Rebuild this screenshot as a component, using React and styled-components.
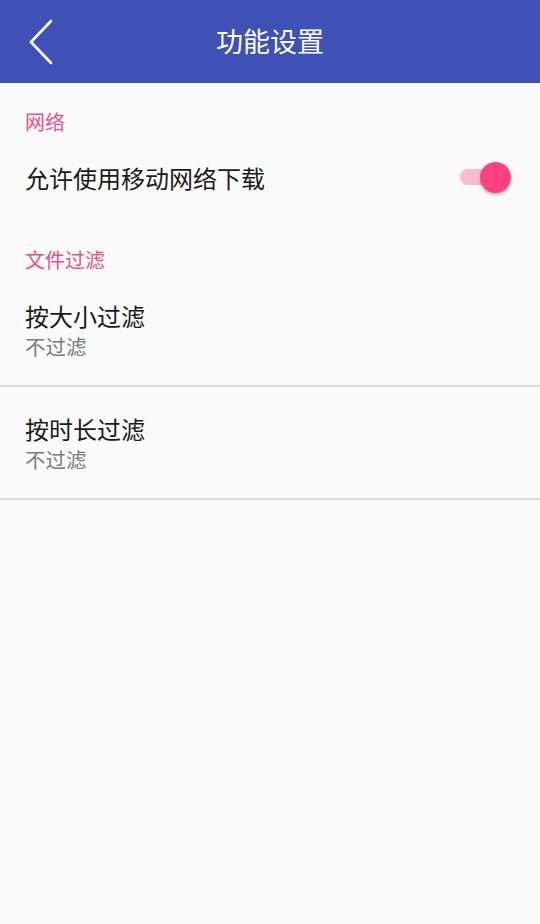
import React from "react";
import styled, { createGlobalStyle } from "styled-components";

const Global = createGlobalStyle`
  html, body { margin: 0; padding: 0; background: #fafafa; }
  body { font-family: "Noto Sans CJK SC", "Noto Sans", sans-serif; }
  #root { min-height: 924px; background: #fafafa; }
`;

const Page = styled.div`
  width: 540px;
  min-height: 924px;
  background: #fafafa;
  display: flex;
  flex-direction: column;
`;

const Toolbar = styled.header`
  height: 83px;
  background: #3f51b5;
  display: flex;
  align-items: center;
  justify-content: center;
  position: relative;
`;

const BackButton = styled.button`
  position: absolute;
  left: 24px;
  top: 14px;
  width: 36px;
  height: 56px;
  border: none;
  background: transparent;
  padding: 0;
  display: flex;
  align-items: center;
  justify-content: center;
`;

const Title = styled.h1`
  margin: 0 0 2px;
  color: #fff;
  font-size: 27px;
  font-weight: 400;
  line-height: 36px;
`;

const Content = styled.main`
  padding-top: 1px;
  display: flex;
  flex-direction: column;
`;

const SectionHeader = styled.div`
  padding: 24px 25px 0;
  font-size: 20px;
  line-height: 28px;
  color: #ec4f86;
`;

const SwitchRow = styled.div`
  height: 86px;
  padding: 0 25px 2px;
  box-sizing: border-box;
  display: flex;
  align-items: center;
  justify-content: space-between;
`;

const ItemTitle = styled.div`
  font-size: 24px;
  line-height: 32px;
  color: #1a1a1a;
`;

const ItemSub = styled.div`
  font-size: 20.5px;
  line-height: 28px;
  color: #7b7b7b;
`;

const Item = styled.div`
  padding: 26px 25px 25px;
  border-bottom: 2px solid #dcdcdc;
  display: flex;
  flex-direction: column;
`;

const Switch = styled.div`
  position: relative;
  width: 52px;
  height: 30px;
  margin-right: 4px;
  margin-bottom: 2px;
`;

const Track = styled.div`
  position: absolute;
  left: 1px;
  right: 6px;
  top: 7px;
  height: 16px;
  border-radius: 8px;
  background: #f9bcd3;
`;

const Thumb = styled.div`
  position: absolute;
  right: 0;
  top: 0;
  width: 31px;
  height: 31px;
  border-radius: 50%;
  background: #ff4081;
  box-shadow: 0 2px 3px rgba(0, 0, 0, 0.25);
`;

export default function App() {
  return (
    <Page>
      <Global />
      <Toolbar>
        <BackButton aria-label="back">
          <svg width="36" height="56" viewBox="0 0 36 56">
            <polyline
              points="27,7 7,28 27,49"
              fill="none"
              stroke="#fff"
              strokeWidth="2.6"
              strokeLinecap="round"
              strokeLinejoin="round"
            />
          </svg>
        </BackButton>
        <Title>功能设置</Title>
      </Toolbar>
      <Content>
        <SectionHeader>网络</SectionHeader>
        <SwitchRow>
          <ItemTitle>允许使用移动网络下载</ItemTitle>
          <Switch>
            <Track />
            <Thumb />
          </Switch>
        </SwitchRow>
        <SectionHeader>文件过滤</SectionHeader>
        <Item>
          <ItemTitle>按大小过滤</ItemTitle>
          <ItemSub>不过滤</ItemSub>
        </Item>
        <Item>
          <ItemTitle>按时长过滤</ItemTitle>
          <ItemSub>不过滤</ItemSub>
        </Item>
      </Content>
    </Page>
  );
}
